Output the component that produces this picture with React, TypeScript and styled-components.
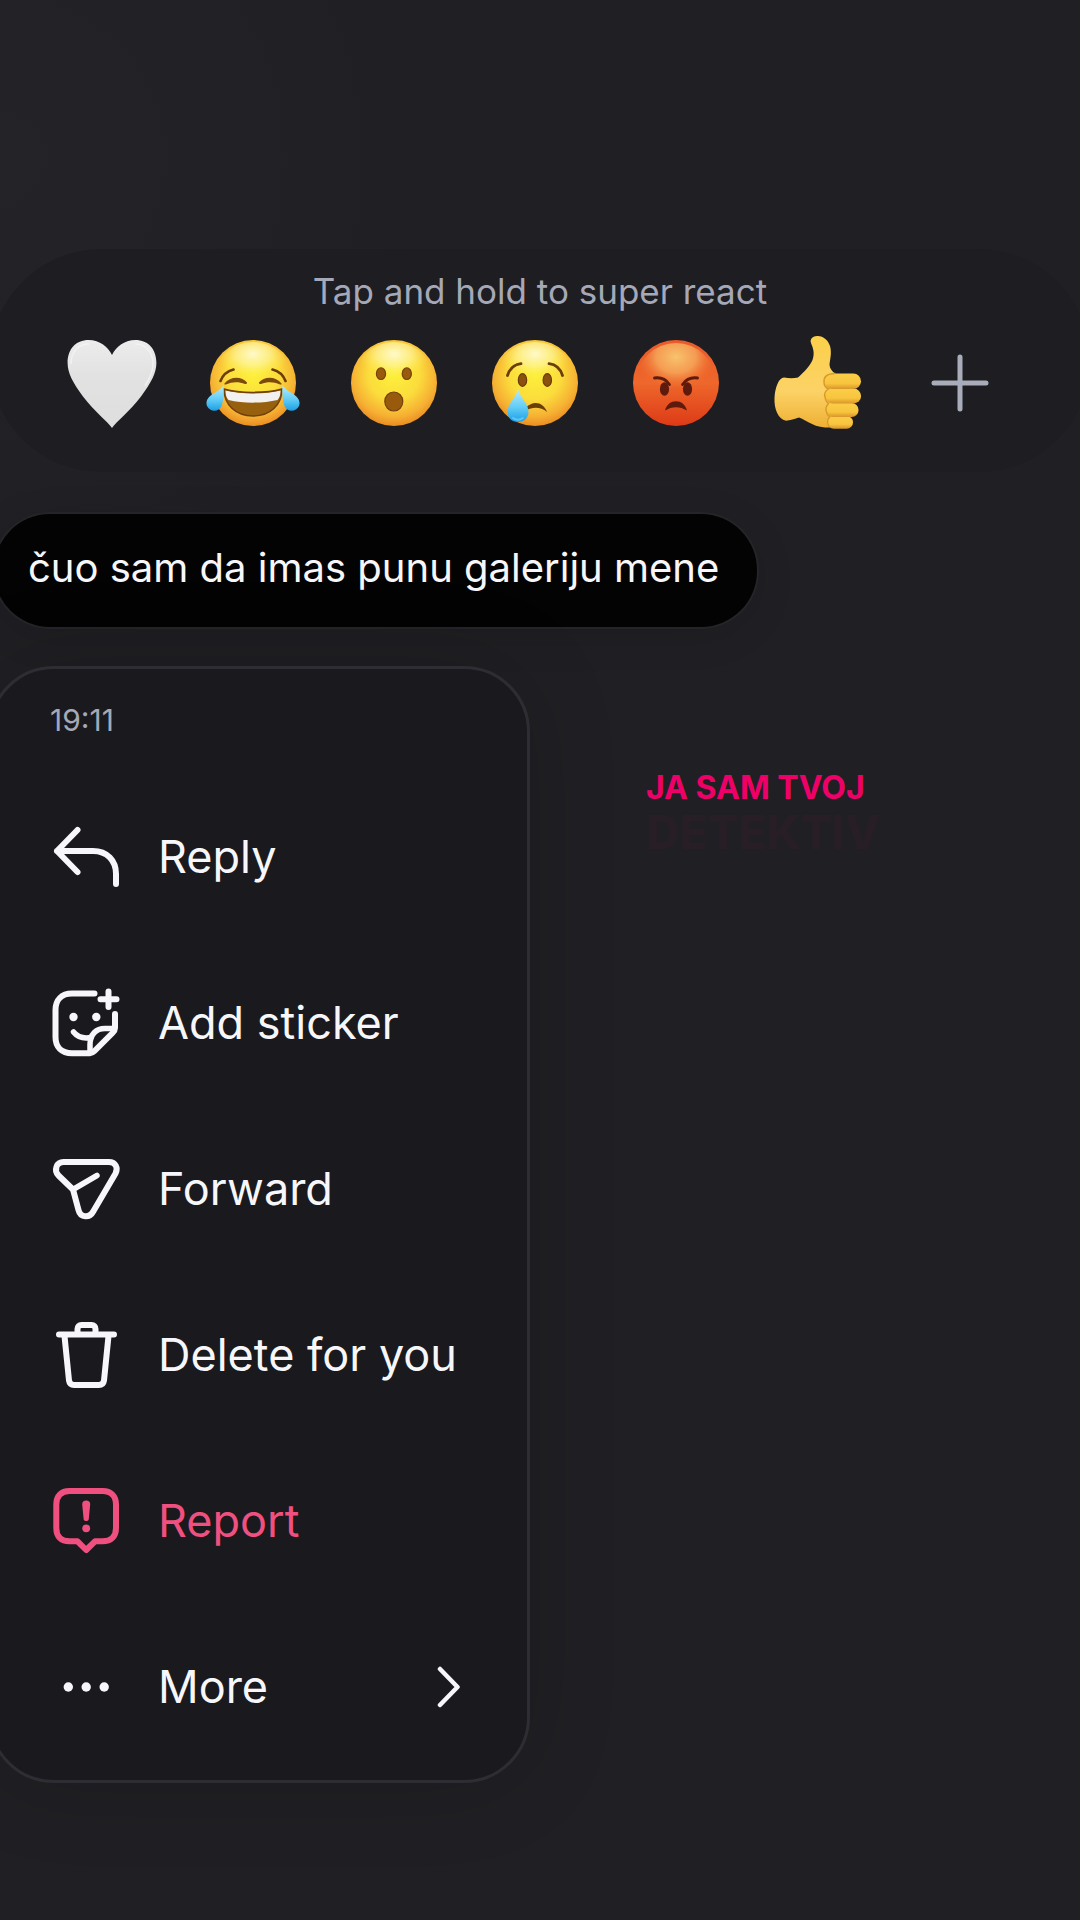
import React from "react";
import styled, { createGlobalStyle } from "styled-components";

const GlobalStyle = createGlobalStyle`
  *, *::before, *::after { box-sizing: border-box; }
  html, body { margin: 0; min-height: 100%; background: #202024; }
  body {
    font-family: Inter, "Liberation Sans", sans-serif;
    color: #f7f7fb;
    -webkit-font-smoothing: antialiased;
  }
  button { font: inherit; color: inherit; background: none; border: 0; padding: 0; margin: 0; cursor: pointer; }
`;

const Screen = styled.main`
  min-height: 100vh;
  overflow: hidden;
  padding: 249px 0 136px;
  background: radial-gradient(circle at 0 160px, #242428 0, #202024 420px);
`;

const ReactionBar = styled.section`
  margin: 0 -10px;
  padding: 22px 0 41px;
  border-radius: 112px;
  background: #1d1d22;
`;

const Hint = styled.p`
  margin: 0 0 24px;
  text-align: center;
  font-size: 35px;
  line-height: 40px;
  color: #a5a8b6;
`;

const Reactions = styled.div`
  display: flex;
  justify-content: space-between;
  align-items: center;
  padding: 0 80px 0 74px;
`;

const ReactionButton = styled.button<{ $wide?: boolean }>`
  display: flex;
  justify-content: center;
  width: ${(p) => (p.$wide ? 100 : 96)}px;
  height: 96px;
  color: #a9adba;
  svg { display: block; overflow: visible; }
`;

const Bubble = styled.p`
  width: fit-content;
  margin: 42px 0 0 -6px;
  padding: 26px 38px 31px 34px;
  border-radius: 56px;
  background: #030304;
  box-shadow: 0 0 0 2px #242429, 0 8px 40px rgba(0, 0, 0, 0.12);
  font-size: 40px;
  line-height: 56px;
`;

const Body = styled.div`
  display: flex;
  align-items: flex-start;
  gap: 116px;
  margin-top: 39px;
`;

const Menu = styled.nav`
  flex: none;
  width: 542px;
  margin-left: -12px;
  padding: 34px 66px 10px 59px;
  border: 3px solid #2d2d33;
  border-radius: 66px;
  background: #1a1a1e;
  box-shadow: 0 0 90px rgba(0, 0, 0, 0.16);
`;

const Time = styled.time`
  display: block;
  margin-bottom: 37px;
  font-size: 30px;
  line-height: 34px;
  color: #a5a8b6;
`;

const MenuItem = styled.button<{ $danger?: boolean }>`
  display: flex;
  align-items: center;
  gap: 36px;
  width: 100%;
  height: 166px;
  text-align: left;
  font-size: 45px;
  line-height: 56px;
  color: ${(p) => (p.$danger ? "#f0507f" : "#f7f7fb")};
  svg { flex: none; display: block; }
`;

const Label = styled.span`
  flex: 1;
  white-space: nowrap;
`;

const Caption = styled.p`
  margin: 102px 0 0;
  font-size: 32px;
  line-height: 40px;
  font-weight: 700;
  color: #ef0068;
`;

const CaptionGhost = styled.span`
  display: block;
  font-size: 46px;
  line-height: 48px;
  font-weight: 800;
  color: #271e26;
`;

const Emoji = ({ children }: { children: React.ReactNode }) => (
  <svg width="96" height="96" viewBox="0 0 96 96" aria-hidden="true">{children}</svg>
);

const YellowFace = ({ id }: { id: string }) => (
  <>
    <defs>
      <radialGradient id={id} cx="50%" cy="40%" r="60%">
        <stop offset="0" stopColor="#fdf03a" />
        <stop offset="0.5" stopColor="#fbdc3c" />
        <stop offset="0.82" stopColor="#f6b033" />
        <stop offset="1" stopColor="#ea8d22" />
      </radialGradient>
      <radialGradient id={id + "-shine"} gradientUnits="userSpaceOnUse" cx="0" cy="0" r="1" gradientTransform="translate(48 19) scale(36 24)">
        <stop offset="0" stopColor="#fffcdc" stopOpacity="0.9" />
        <stop offset="0.5" stopColor="#fff9b4" stopOpacity="0.55" />
        <stop offset="1" stopColor="#fff04a" stopOpacity="0" />
      </radialGradient>
    </defs>
    <circle cx="48" cy="48" r="43" fill={`url(#${id})`} />
    <circle cx="48" cy="48" r="41" fill={`url(#${id}-shine)`} />
  </>
);

const TearGradient = ({ id }: { id: string }) => (
  <defs>
    <linearGradient id={id} x1="0" y1="0" x2="0" y2="1">
      <stop offset="0" stopColor="#b8ecfb" />
      <stop offset="0.55" stopColor="#62cdf6" />
      <stop offset="1" stopColor="#1c9fe8" />
    </linearGradient>
  </defs>
);

const Heart = () => (
  <Emoji>
    <defs>
      <linearGradient id="heart" x1="0" y1="0" x2="0" y2="1">
        <stop offset="0" stopColor="#ececec" />
        <stop offset="0.4" stopColor="#e2e2e2" />
        <stop offset="1" stopColor="#dedede" />
      </linearGradient>
    </defs>
    <path fill="url(#heart)" d="M48 93C44 87 30 76 19 61.5C9 48 3.6 38 3.6 28C3.6 14 12 5 24.5 5C36 5 44 12 48 20C52 12 60 5 71.5 5C84 5 92.4 14 92.4 28C92.4 38 87 48 77 61.5C66 76 52 87 48 93Z" />
    <path fill="none" stroke="#f6f6f6" strokeWidth="1.5" opacity=".7" d="M7 29C7 17 14 9 25 9M71 9C82 9 89 17 89 29C89 36 86 43 81 51" />
  </Emoji>
);

const Joy = () => (
  <Emoji>
    <YellowFace id="joy" />
    <TearGradient id="joy-tear" />
    <path fill="none" stroke="#6b3d08" strokeLinecap="round" strokeWidth="2.6" d="M15.5 46C18 39.5 22.5 36 28.5 34.5M80.5 46C78 39.5 73.5 36 67.5 34.5" />
    <path fill="#7c4a0c" d="M19.5 48.5C25 41 37 41 42 47.5C42 49 41 49.3 40 49C34 46.5 27 46.5 21.5 49.3C20 49.8 19 49.5 19.5 48.5ZM76.5 48.5C71 41 59 41 54 47.5C54 49 55 49.3 56 49C62 46.5 69 46.5 74.5 49.3C76 49.8 77 49.5 76.5 48.5Z" />
    <path fill="#96600f" d="M19 54C35 58.5 61 58.5 77 54C77 70 65 81 48 81C31 81 19 70 19 54Z" />
    <path fill="#f2f0f1" d="M20.5 55.5C36 59.5 60 59.5 75.5 55.5C75.5 60 74.5 63 72.5 65C58 68.5 38 68.5 23.5 65C21.5 63 20.5 60 20.5 55.5Z" />
    <path fill="none" stroke="#70400a" strokeWidth="1.5" d="M19 54C35 58.5 61 58.5 77 54C77 70 65 81 48 81C31 81 19 70 19 54Z" />
    <path fill="url(#joy-tear)" d="M18.5 50.5C19 58 18.5 66 16.5 71C14 77 5 77.5 2 71C-0.5 64 6 60 11 57C14.5 55 17 52.5 18.5 50.5ZM77.5 50.5C77 58 77.5 66 79.5 71C82 77 91 77.5 94 71C96.5 64 90 60 85 57C81.5 55 79 52.5 77.5 50.5Z" />
  </Emoji>
);

const Wow = () => (
  <Emoji>
    <YellowFace id="wow" />
    <g fill="#9a5a0e" stroke="#74420c" strokeWidth="1.2">
      <ellipse cx="35" cy="38.7" rx="4.6" ry="5.8" />
      <ellipse cx="60.8" cy="38.7" rx="4.6" ry="5.8" />
      <ellipse cx="47.8" cy="66.5" rx="9" ry="9.5" />
    </g>
  </Emoji>
);

const Sad = () => (
  <Emoji>
    <YellowFace id="sad" />
    <TearGradient id="sad-tear" />
    <path fill="none" stroke="#6b3d08" strokeWidth="2.8" strokeLinecap="round" d="M20.5 40.5C22.5 34 27.5 29.5 34 28.7M75.5 40.5C73.5 34 68.5 29.5 62 28.7" />
    <g fill="#8b510e" stroke="#6b3d08" strokeWidth="1.2">
      <ellipse cx="35.5" cy="45" rx="4.2" ry="6.4" />
      <ellipse cx="60.3" cy="45" rx="4.2" ry="6.4" />
    </g>
    <path fill="#6b3d08" d="M39 72.5C46 65.5 56 66.5 60 77C54 72 46 71.5 39 75.5Z" />
    <path fill="url(#sad-tear)" d="M31 54C33.5 64 41.5 68 41.5 77C41.5 83 37 87 31 87C25 87 20.5 83 20.5 77C20.5 68 28.5 64 31 54Z" />
    <path fill="none" stroke="#5fc6f4" strokeWidth="2" strokeLinecap="round" d="M26 83C29 85 33 85 36 83" />
  </Emoji>
);

const Angry = () => (
  <Emoji>
    <defs>
      <linearGradient id="angry" x1="0" y1="0" x2="0" y2="1">
        <stop offset="0" stopColor="#ea5a2a" />
        <stop offset="0.5" stopColor="#ee672b" />
        <stop offset="1" stopColor="#dd3a17" />
      </linearGradient>
      <radialGradient id="angry-shine" gradientUnits="userSpaceOnUse" cx="0" cy="0" r="1" gradientTransform="translate(48 22) scale(40 32)">
        <stop offset="0" stopColor="#f9c970" stopOpacity="0.95" />
        <stop offset="0.5" stopColor="#f7b060" stopOpacity="0.75" />
        <stop offset="1" stopColor="#f0702e" stopOpacity="0" />
      </radialGradient>
    </defs>
    <circle cx="48" cy="48" r="43" fill="url(#angry)" />
    <circle cx="48" cy="48" r="40" fill="url(#angry-shine)" />
    <path fill="none" stroke="#5e1a0c" strokeWidth="2.8" strokeLinecap="round" d="M26.5 43C33 42 38 44.5 41.5 49.5M69.5 43C63 42 58 44.5 54.5 49.5" />
    <g fill="#5e1a0c">
      <ellipse cx="36.5" cy="54" rx="4.6" ry="6.8" />
      <ellipse cx="59.5" cy="54" rx="4.6" ry="6.8" />
      <path d="M37 75.5C40 63 56 63 59 75.5C52 71 44 71 37 75.5Z" />
    </g>
  </Emoji>
);

const Thumb = () => (
  <Emoji>
    <defs>
      <linearGradient id="hand" x1="0" y1="0" x2="0" y2="1">
        <stop offset="0" stopColor="#fbd04a" />
        <stop offset="0.6" stopColor="#fcd266" />
        <stop offset="1" stopColor="#eeb034" />
      </linearGradient>
      <linearGradient id="finger" x1="0" y1="0" x2="0" y2="1">
        <stop offset="0" stopColor="#fbce48" />
        <stop offset="0.65" stopColor="#f8c43e" />
        <stop offset="1" stopColor="#d9952a" />
      </linearGradient>
    </defs>
    <path fill="url(#hand)" d="M48 1C54 0.5 59 5 61 11C63 18 61 24 60.5 30C61 34 63 36 66 38.5V92.5C56 93 49 92 43 89C38 86.5 34 84 30 82.5C26 84 21 85.5 17 85.7C9 84 5 74 5.5 63C6 52 10 42.5 15 42.5C20 43.5 25 43.5 29 42.5C35 37 41 31 43.5 25C46 18 44 13 42 8C40.5 4 44 1 48 1Z" />
    <g fill="url(#finger)">
      <rect x="58.5" y="81" width="25.5" height="12.7" rx="6.3" />
      <rect x="56.5" y="68" width="33" height="14" rx="6.8" />
      <rect x="56" y="53.5" width="36" height="15" rx="7.3" />
      <rect x="55" y="38.5" width="37" height="15.5" rx="7.7" />
    </g>
    <path fill="none" stroke="#d8992b" strokeWidth="1.4" strokeLinecap="round" d="M66 38.5C58 38.5 54.5 42 55 47C55 51 57 53 59.5 54C56 56 55 59 56 62C56.5 66 58 67.5 59.5 68.5C57 71 56.5 74 57.5 77C58 80 59 81 60.5 82C58 85 58.5 89 60 91.5" />
  </Emoji>
);

const PlusGlyph = () => (
  <svg width="96" height="96" viewBox="0 0 96 96" aria-hidden="true" fill="none" stroke="currentColor" strokeWidth="5" strokeLinecap="round">
    <path d="M48 22V74M22 48H74" />
  </svg>
);

const Icon = ({ children }: { children: React.ReactNode }) => (
  <svg width="72" height="72" viewBox="0 0 72 72" aria-hidden="true" fill="none" stroke="currentColor" strokeWidth="6" strokeLinecap="round" strokeLinejoin="round">
    {children}
  </svg>
);

const ReplyIcon = () => (
  <Icon><path d="M27.5 9L7 30L27.5 51M7 30H43C57 30 66 39.5 66 53V63" /></Icon>
);

const StickerIcon = () => (
  <Icon>
    <path d="M44.5 6.5H22C11.5 6.5 5.5 13 5.5 23V50C5.5 60 11.5 66.2 22 66.2H40C42 66.2 43 65.5 44.5 64L62.5 46C64 44.5 65 43.5 65 41V27" />
    <path strokeWidth="5.5" d="M40 65V57.5C40 47.5 46 41.5 55 41.5H64" />
    <path strokeWidth="5.5" d="M23.5 45C27.5 50 33 52 41 50.5" />
    <path d="M58.5 4.5V20M50.5 12.3H66.5" />
    <circle cx="23.5" cy="30" r="4.2" fill="currentColor" stroke="none" />
    <circle cx="46.3" cy="30" r="4.2" fill="currentColor" stroke="none" />
  </Icon>
);

const ForwardIcon = () => (
  <Icon>
    <path d="M13.5 9H59C65.5 9 68.5 15 65.5 20.5L43.5 58C39.5 65.5 30.5 65 28.5 57L23 36.5L8.5 22.5C3.5 17 6.5 9 13.5 9Z" />
    <path strokeWidth="5.5" d="M23 36.5L47 22.5" />
  </Icon>
);

const TrashIcon = () => (
  <Icon>
    <path d="M9 15.5H64M27.5 14V10C27.5 7.5 29 6 31.5 6H41.5C44 6 45.5 7.5 45.5 10V14M14.5 17L19 61.5C19.5 64.5 21 66 24 66H49C52 66 53.5 64.5 54 61.5L58.5 17" />
  </Icon>
);

const ReportIcon = () => (
  <Icon>
    <path d="M19.5 6H52.5C61 6 66 11 66 19.5V43C66 51.5 61 56.3 52.5 56.3H45L36.2 65L27.5 56.3H19.5C11 56.3 6.3 51.5 6.3 43V19.5C6.3 11 11 6 19.5 6Z" />
    <path fill="currentColor" stroke="none" d="M32.2 19.2C32 17 33.8 15.5 36.2 15.5C38.6 15.5 40.4 17 40.2 19.2L38.8 34C38.6 36.8 33.8 36.8 33.6 34Z" />
    <circle cx="36.2" cy="43.3" r="3.9" fill="currentColor" stroke="none" />
  </Icon>
);

const DotsIcon = () => (
  <Icon>
    <g fill="currentColor" stroke="none">
      <circle cx="18.3" cy="36" r="4.7" />
      <circle cx="36.2" cy="36" r="4.7" />
      <circle cx="54.2" cy="36" r="4.7" />
    </g>
  </Icon>
);

const Chevron = () => (
  <svg width="24" height="44" viewBox="0 0 24 44" aria-hidden="true" fill="none" stroke="currentColor" strokeWidth="4.5" strokeLinecap="round" strokeLinejoin="round">
    <path d="M3 4L20.5 22L3 40" />
  </svg>
);

const reactions = [
  { name: "White heart", Glyph: Heart },
  { name: "Tears of joy", Glyph: Joy },
  { name: "Surprised", Glyph: Wow },
  { name: "Crying", Glyph: Sad },
  { name: "Angry", Glyph: Angry },
  { name: "Thumbs up", Glyph: Thumb },
];

const actions = [
  { label: "Reply", Glyph: ReplyIcon },
  { label: "Add sticker", Glyph: StickerIcon },
  { label: "Forward", Glyph: ForwardIcon },
  { label: "Delete for you", Glyph: TrashIcon },
  { label: "Report", Glyph: ReportIcon, danger: true },
  { label: "More", Glyph: DotsIcon, submenu: true },
];

export default function App() {
  return (
    <>
      <GlobalStyle />
      <Screen>
        <ReactionBar>
          <Hint>Tap and hold to super react</Hint>
          <Reactions>
            {reactions.map(({ name, Glyph }) => (
              <ReactionButton key={name} type="button" aria-label={name}>
                <Glyph />
              </ReactionButton>
            ))}
            <ReactionButton $wide type="button" aria-label="More reactions">
              <PlusGlyph />
            </ReactionButton>
          </Reactions>
        </ReactionBar>
        <Bubble>čuo sam da imas punu galeriju mene</Bubble>
        <Body>
          <Menu>
            <Time dateTime="19:11">19:11</Time>
            {actions.map(({ label, Glyph, danger, submenu }) => (
              <MenuItem key={label} type="button" $danger={danger}>
                <Glyph />
                <Label>{label}</Label>
                {submenu && <Chevron />}
              </MenuItem>
            ))}
          </Menu>
          <Caption>
            JA SAM TVOJ
            <CaptionGhost>DETEKTIV</CaptionGhost>
          </Caption>
        </Body>
      </Screen>
    </>
  );
}
